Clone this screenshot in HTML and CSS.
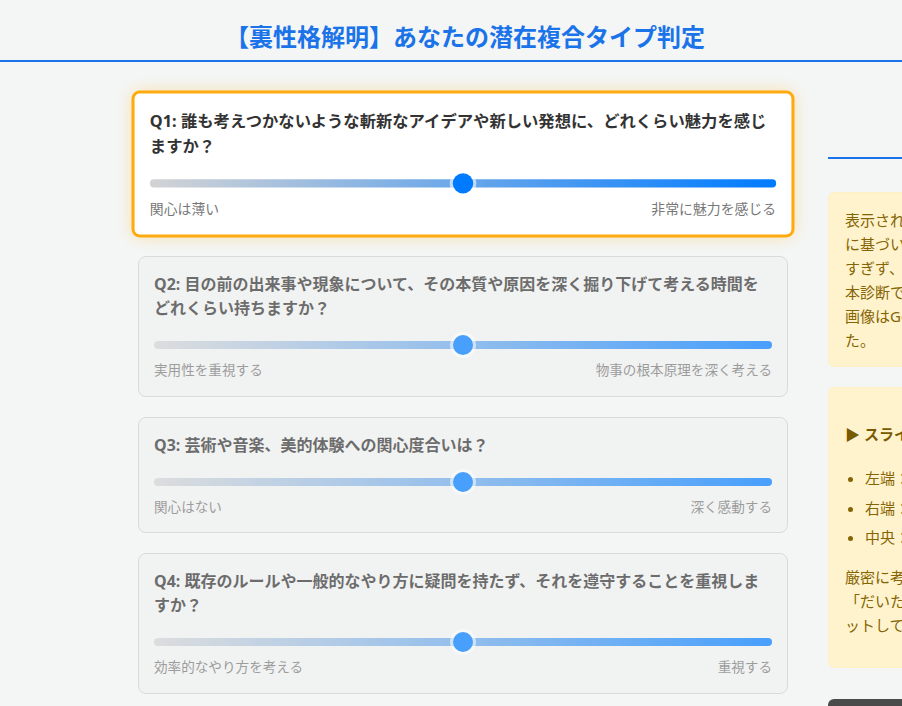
FILE: index.html
```html
<!DOCTYPE html>
<html lang="ja">
<head>
<meta charset="utf-8">
<title>裏性格解明</title>
<link rel="stylesheet" href="styles.css">
</head>
<body>
<header class="site-header">
  <h1 class="site-title">【裏性格解明】あなたの潜在複合タイプ判定</h1>
</header>
<main class="layout">
  <section class="questions">
    <div class="q-card active">
      <p class="q-text"><span class="q-num">Q1:</span> 誰も考えつかないような斬新なアイデアや新しい発想に、どれくらい魅力を感じますか？</p>
      <div class="slider"><div class="track"></div><div class="thumb"></div></div>
      <div class="labels"><span>関心は薄い</span><span>非常に魅力を感じる</span></div>
    </div>
    <div class="q-card">
      <p class="q-text"><span class="q-num">Q2:</span> 目の前の出来事や現象について、その本質や原因を深く掘り下げて考える時間をどれくらい持ちますか？</p>
      <div class="slider"><div class="track"></div><div class="thumb"></div></div>
      <div class="labels"><span>実用性を重視する</span><span>物事の根本原理を深く考える</span></div>
    </div>
    <div class="q-card">
      <p class="q-text"><span class="q-num">Q3:</span> 芸術や音楽、美的体験への関心度合いは？</p>
      <div class="slider"><div class="track"></div><div class="thumb"></div></div>
      <div class="labels"><span>関心はない</span><span>深く感動する</span></div>
    </div>
    <div class="q-card">
      <p class="q-text"><span class="q-num">Q4:</span> 既存のルールや一般的なやり方に疑問を持たず、それを遵守することを重視しますか？</p>
      <div class="slider"><div class="track"></div><div class="thumb"></div></div>
      <div class="labels"><span>効率的なやり方を考える</span><span>重視する</span></div>
    </div>
  </section>
  <aside class="side">
    <h2 class="side-title">診断について</h2>
    <div class="note">
      <p>表示される結果は、あなたの回答内容<br>に基づいた傾向を示すものです。深く考え<br>すぎず、参考程度にお楽しみください。<br>本診断で使用している各タイプの説明や<br>画像はGoogleの生成AIにより作成しまし<br>た。</p>
    </div>
    <div class="note">
      <h4 class="note-title">▶ スライダーの使い方</h4>
      <ul class="note-list">
        <li>左端：まったく当てはまらない</li>
        <li>右端：とても当てはまる</li>
        <li>中央：どちらとも言えない</li>
      </ul>
      <p>厳密に考えすぎず、直感で答えてください。<br>「だいたいこのくらい」という位置にセ<br>ットしてください。</p>
    </div>
    <div class="result-box">診断結果を見る</div>
  </aside>
</main>
</body>
</html>
```

FILE: styles.css
```css
html, body {
  overflow: hidden;
}
body {
  margin: 0;
  background: #f4f6f6;
  font-family: "Noto Sans", "Noto Sans CJK JP", sans-serif;
  color: #333;
}
.site-header {
  padding: 18px 0 6px 28px;
  border-bottom: 2px solid #1a73e8;
  text-align: center;
}
.site-title {
  margin: 0;
  font-size: 24px;
  line-height: 36px;
  font-weight: 700;
  color: #1a73e8;
  font-family: "Noto Sans CJK JP", sans-serif;
}
.layout {
  display: flex;
  align-items: flex-start;
  gap: 40px;
  padding: 30px 0 0 138px;
}
.questions {
  flex: 0 0 650px;
  width: 650px;
}
.q-card {
  box-sizing: border-box;
  background: #f1f1f1;
  border: 1px solid #cfcfcf;
  border-radius: 8px;
  padding: 15px;
  margin-bottom: 20px;
  opacity: 0.7;
}
.q-card.active {
  background: #fff;
  border: 3px solid #ffab0f;
  opacity: 1;
  transform: scale(1.02);
  box-shadow: 0 0 16px rgba(255, 190, 60, 0.35);
}
.q-text {
  margin: 0 0 15px;
  font-size: 16px;
  line-height: 24px;
  font-weight: 700;
  color: #333;
}
.slider {
  position: relative;
  height: 20px;
  display: flex;
  align-items: center;
}
.track {
  width: 100%;
  height: 8px;
  border-radius: 4px;
  background: linear-gradient(to right, #d3d3d4, #007bff);
}
.thumb {
  position: absolute;
  left: 50%;
  top: 0;
  width: 20px;
  height: 20px;
  margin-left: -10px;
  border-radius: 50%;
  background: #007bff;
  box-shadow: 0 0 0 3px rgba(255, 255, 255, 0.6);
}
.labels {
  display: flex;
  justify-content: space-between;
  margin-top: 5px;
  font-size: 13.6px;
  line-height: 20.4px;
  color: #777;
}
.side {
  flex: 0 0 300px;
  width: 300px;
}
.side-title {
  margin: 0;
  height: 67px;
  box-sizing: border-box;
  padding-top: 22px;
  font-size: 20px;
  line-height: 30px;
  text-align: center;
  color: #1a73e8;
  border-bottom: 2px solid #1a73e8;
}
.note {
  margin-top: 33px;
  background: #fff3cd;
  border: 1px solid #fff0c6;
  border-radius: 6px;
  padding: 15px 16px 14px;
  color: #856404;
  font-size: 15px;
  line-height: 24px;
  white-space: nowrap;
}
.note + .note {
  margin-top: 20px;
}
.note p {
  margin: 0;
}
.note-title {
  margin: 19px 0 20px;
  font-size: 15px;
  line-height: 24px;
  font-weight: 700;
  color: #7a5a00;
}
.note-list {
  margin: 0 0 16px;
  padding-left: 20px;
}
.note-list li {
  margin-bottom: 5.5px;
}
.note-list li:last-child {
  margin-bottom: 0;
}
.note-list + p {
  margin-bottom: 16px;
}
.result-box {
  margin-top: 31px;
  height: 50px;
  border-radius: 6px;
  background: #4a4a4a;
  color: #fff;
  font-size: 16px;
  line-height: 50px;
  text-align: center;
}
```
